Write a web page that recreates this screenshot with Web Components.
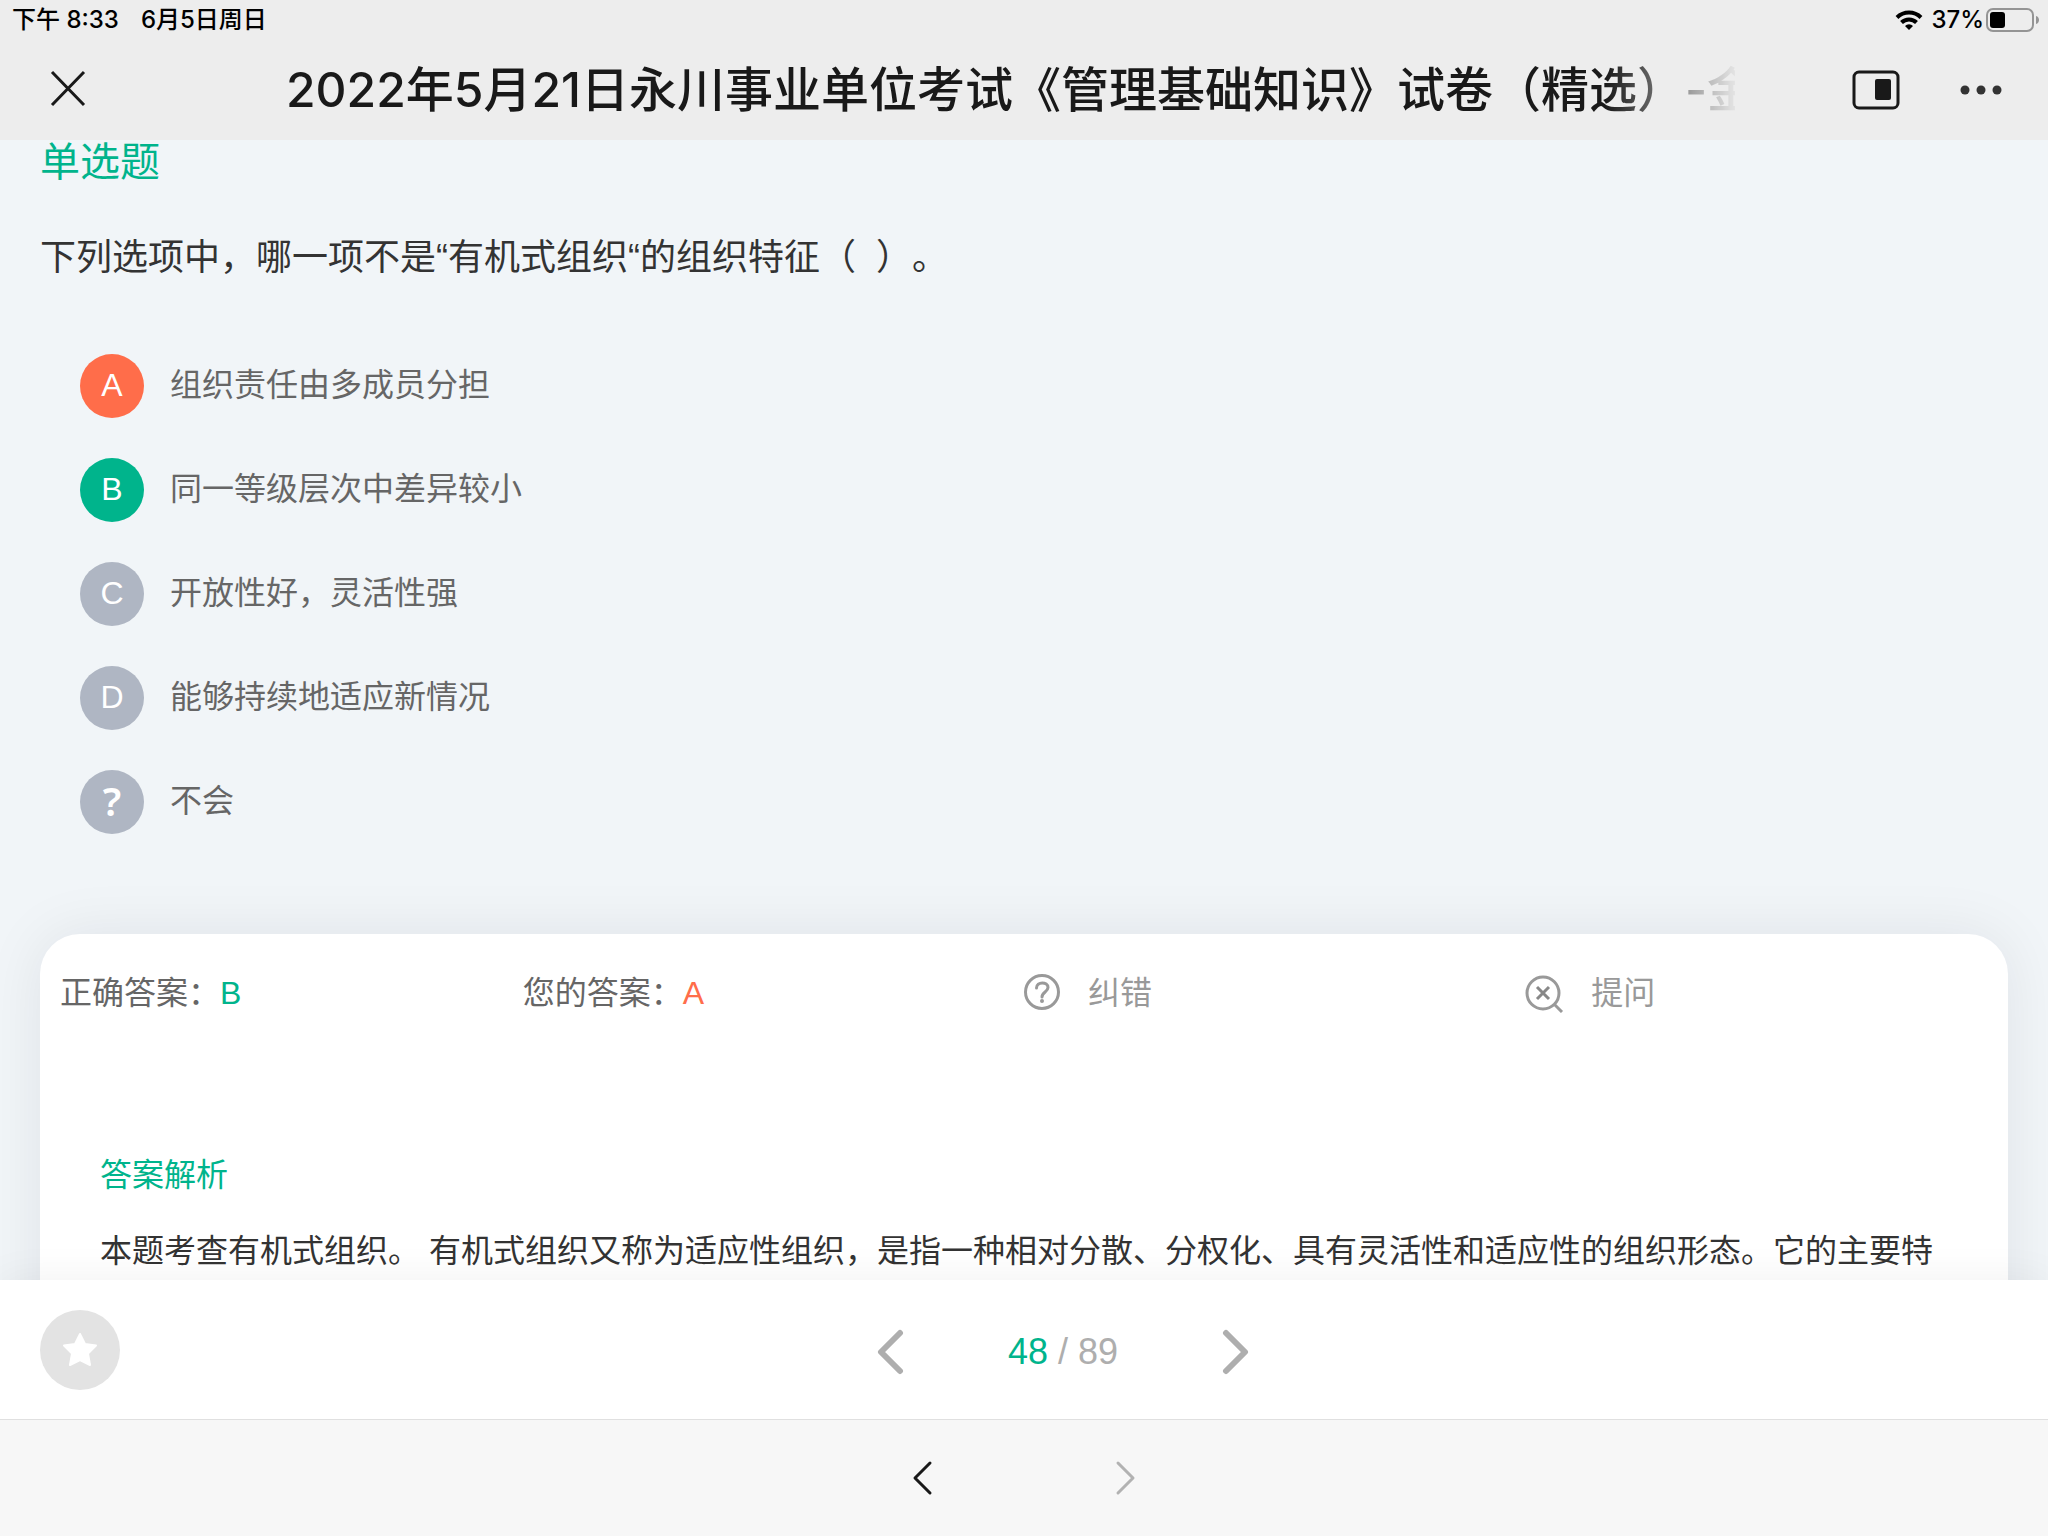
<!DOCTYPE html>
<html lang="zh-CN">

<head>
    <meta charset="UTF-8">
    <meta name="viewport" content="width=device-width, initial-scale=1.0">
    <title>管理基础知识</title>
    <style>
        html,
        body {
            margin: 0;
            height: 100%;
        }

        body {
            font-family: "Liberation Sans", "Noto Sans CJK SC", sans-serif;
            text-spacing-trim: space-all;
        }
    </style>
</head>

<body>
    <quiz-app></quiz-app>

    <script>
        // shared by every shadow root
        const base = `
            *{ box-sizing: border-box; }
            button{
                margin: 0;
                padding: 0;
                border: 0;
                background: none;
                font: inherit;
                color: inherit;
                text-align: left;
            }
            svg{ display: block; fill: none; stroke: currentColor; flex: none; }
        `;

        function define(name, html) {
            const template = document.createElement('template');
            template.innerHTML = html;
            customElements.define(name, class extends HTMLElement {
                constructor() {
                    super();
                    this.attachShadow({ mode: 'open' }).appendChild(template.content.cloneNode(true));
                }
            });
        }

        define('status-bar', `<style>${base}
            :host{
                display: flex;
                justify-content: space-between;
                align-items: center;
                height: 40px;
                padding: 0 8px 0 12px;
                background: #ededed;
                color: #000;
                font: 500 24px/40px Inter, "Noto Sans CJK SC", sans-serif;
            }
            div{ display: flex; align-items: center; }
            .left{ gap: 22px; }
            .right{ gap: 8px; }
            .percent{ margin-right: -6px; }
        </style>
        <div class="left"><span>下午 8:33</span><span>6月5日周日</span></div>
        <div class="right">
            <svg width="28" height="22" viewBox="0 0 28 22" stroke-width="4">
                <path d="M2 8.500a17 17 0 0 1 24 0M6.500 13.500a10.600 10.600 0 0 1 15 0"/>
                <path d="M14 21l-4-4a5.700 5.700 0 0 1 8 0z" fill="currentColor" stroke="none"/>
            </svg>
            <span class="percent">37%</span>
            <svg width="54" height="24" viewBox="0 0 54 24">
                <rect x="1" y="1" width="46" height="22" rx="6" stroke="#949494" stroke-width="2"/>
                <rect x="4" y="4" width="15" height="16" rx="3" fill="#000" stroke="none"/>
                <path d="M50 8c4 1 4 7 0 8z" fill="#949494" stroke="none"/>
            </svg>
        </div>`);

        define('title-bar', `<style>${base}
            :host{
                display: flex;
                align-items: center;
                height: 100px;
                padding: 0 46px 0 48px;
                background: #ededed;
                color: #191919;
            }
            .close{ width: 238px; }
            h1{
                flex: 1;
                min-width: 0;
                margin: 0;
                overflow: hidden;
                white-space: nowrap;
                font: 500 48px/100px Inter, "Noto Sans CJK SC", sans-serif;
                -webkit-mask-image: linear-gradient(to right, #000 calc(100% - 130px), rgba(0, 0, 0, .04));
                mask-image: linear-gradient(to right, #000 calc(100% - 130px), rgba(0, 0, 0, .04));
            }
            .tools{
                display: flex;
                align-items: center;
                justify-content: flex-end;
                gap: 60px;
                width: 267px;
            }
        </style>
        <div class="close"><button aria-label="关闭">
            <svg width="40" height="40" viewBox="0 0 40 40" stroke-width="3"><path d="M4 4l32 33M36 4L4 37"/></svg>
        </button></div>
        <h1><slot></slot></h1>
        <div class="tools">
            <button aria-label="浮窗">
                <svg width="48" height="40" viewBox="0 0 48 40">
                    <rect x="2" y="2" width="44" height="36" rx="5" stroke-width="3"/>
                    <rect x="23" y="9" width="16" height="21" rx="2" fill="currentColor" stroke="none"/>
                </svg>
            </button>
            <button aria-label="更多">
                <svg width="42" height="10" viewBox="0 0 42 10">
                    <g fill="#333" stroke="none"><circle cx="5" cy="5" r="4.500"/><circle cx="21" cy="5" r="4.500"/><circle cx="37" cy="5" r="4.500"/></g>
                </svg>
            </button>
        </div>`);

        define('quiz-option', `<style>${base}
            :host{ display: block; }
            button{
                display: flex;
                align-items: flex-start;
                gap: 26px;
                font-size: 32px;
                line-height: 62px;
                color: #666;
            }
            .mark{
                width: 64px;
                height: 64px;
                border-radius: 50%;
                background: #afb6c3;
                color: #fff;
                text-align: center;
            }
            :host([state=wrong]) .mark{ background: #ff6d4a; }
            :host([state=right]) .mark{ background: #00b48c; }
            :host([state=unknown]) .mark{ font: 600 40px/62px "Noto Sans", sans-serif; }
        </style>
        <button><span class="mark"><slot name="mark"></slot></span><span><slot></slot></span></button>`);

        define('answer-card', `<style>${base}
            :host{
                display: block;
                height: 600px;
                margin: 0 40px;
                padding: 35px 20px 0;
                border-radius: 40px;
                background: #fff;
                box-shadow: 0 0 60px rgba(0, 20, 40, .08);
                color: #666;
                font-size: 32px;
                line-height: 48px;
            }
            .row{
                display: grid;
                grid-template-columns: 24fr 26fr 26fr 24fr;
                align-items: center;
            }
            .row span{ display: block; }
            b{ font-weight: normal; }
            .right{ color: #00b48c; }
            .wrong{ color: #ff6d4a; }
            button{
                display: flex;
                align-items: center;
                gap: 26px;
                color: #999;
            }
            .detail{ padding: 134px 40px 0; }
            h2{
                margin: 0 0 28px;
                font: inherit;
                color: #00b48c;
            }
            p{ margin: 0; color: #333; }
        </style>
        <div class="row">
            <span>正确答案：<b class="right">B</b></span>
            <span>您的答案：<b class="wrong">A</b></span>
            <button>
                <svg width="38" height="38" viewBox="0 0 38 38" stroke="#aaa" stroke-width="3">
                    <circle cx="18" cy="18" r="16.500"/>
                    <path d="M12.500 14c0-7 11.500-6.500 11.500-.5 0 4.500-6 4.500-6 9.500" stroke-linecap="round"/>
                    <circle cx="18" cy="27" r="1" stroke-width="2"/>
                </svg>
                <span>纠错</span>
            </button>
            <button>
                <svg width="40" height="40" viewBox="0 0 40 40" stroke="#aaa" stroke-width="3">
                    <circle cx="18" cy="20" r="16"/>
                    <path d="M29 31l8 8"/>
                    <path d="M12 14l12 12M24 14L12 26" stroke="#888"/>
                </svg>
                <span>提问</span>
            </button>
        </div>
        <div class="detail">
            <h2>答案解析</h2>
            <p><slot></slot></p>
        </div>`);

        define('quiz-pager', `<style>${base}
            :host{
                display: flex;
                align-items: center;
                position: relative;
                height: 139px;
                padding: 0 40px;
                background: #fff;
                box-shadow: 0 0 40px rgba(0, 0, 0, .06);
                color: #aeaeae;
                font-size: 36px;
            }
            .star{
                display: grid;
                place-items: center;
                width: 80px;
                height: 80px;
                border-radius: 50%;
                background: #e3e3e3;
                color: #fff;
            }
            nav{
                flex: 1;
                display: flex;
                align-items: center;
                justify-content: center;
                gap: 104px;
                padding: 4px 2px 0 0;
            }
            b{ font-weight: normal; color: #00b48c; }
        </style>
        <button class="star" aria-label="收藏">
            <svg width="36" height="36" viewBox="0 0 36 36" stroke-width="2" stroke-linejoin="round">
                <path fill="currentColor" d="M18 2l5 10 11 1.500-8 8 2 11.500-10-5-10 5 2-11.500-8-8L13 12z"/>
            </svg>
        </button>
        <nav>
            <button aria-label="上一题"><svg width="28" height="46" viewBox="0 0 28 46" stroke-width="6" stroke-linecap="round" stroke-linejoin="round"><path d="M24 4L5 23l19 19"/></svg></button>
            <span><b>48</b> / 89</span>
            <button aria-label="下一题"><svg width="28" height="46" viewBox="0 0 28 46" stroke-width="6" stroke-linecap="round" stroke-linejoin="round"><path d="M4 4l19 19L4 42"/></svg></button>
        </nav>`);

        define('browser-bar', `<style>${base}
            :host{
                display: flex;
                align-items: center;
                justify-content: center;
                gap: 180px;
                position: relative;
                height: 117px;
                border-top: 1px solid #e0e0e0;
                background: #f7f7f7;
                color: #191919;
            }
            button:disabled{ color: #b2b2b2; }
        </style>
        <button aria-label="后退"><svg width="22" height="36" viewBox="0 0 22 36" stroke-width="3" stroke-linecap="round" stroke-linejoin="round"><path d="M18 3L3 18l15 15"/></svg></button>
        <button aria-label="前进" disabled><svg width="22" height="36" viewBox="0 0 22 36" stroke-width="3" stroke-linecap="round" stroke-linejoin="round"><path d="M4 3l15 15L4 33"/></svg></button>`);

        define('quiz-app', `<style>${base}
            :host{
                display: flex;
                flex-direction: column;
                height: 100vh;
                overflow: hidden;
                background: #f1f5f8;
            }
            status-bar, title-bar, quiz-pager, browser-bar{ flex: none; }
            main{
                flex: 1;
                min-height: 0;
                overflow: hidden;
            }
            h2{
                margin: 0;
                padding: 0 40px;
                font-size: 40px;
                font-weight: normal;
                line-height: 44px;
                color: #00b48c;
            }
            .question{
                margin: 0;
                padding: 48px 40px 0;
                font-size: 36px;
                line-height: 52px;
                color: #333;
            }
            .options{
                display: flex;
                flex-direction: column;
                gap: 40px;
                padding: 70px 80px 100px;
            }
        </style>
        <status-bar></status-bar>
        <title-bar>2022年5月21日永川事业单位考试《管理基础知识》试卷（精选）-金</title-bar>
        <main>
            <h2>单选题</h2>
            <p class="question">下列选项中，哪一项不是“有机式组织“的组织特征（&nbsp;&nbsp;）。</p>
            <div class="options">
                <quiz-option state="wrong"><span slot="mark">A</span>组织责任由多成员分担</quiz-option>
                <quiz-option state="right"><span slot="mark">B</span>同一等级层次中差异较小</quiz-option>
                <quiz-option><span slot="mark">C</span>开放性好，灵活性强</quiz-option>
                <quiz-option><span slot="mark">D</span>能够持续地适应新情况</quiz-option>
                <quiz-option state="unknown"><span slot="mark">?</span>不会</quiz-option>
            </div>
            <answer-card>本题考查有机式组织。 有机式组织又称为适应性组织，是指一种相对分散、分权化、具有灵活性和适应性的组织形态。它的主要特</answer-card>
        </main>
        <quiz-pager></quiz-pager>
        <browser-bar></browser-bar>`);
    </script>
</body>

</html>
